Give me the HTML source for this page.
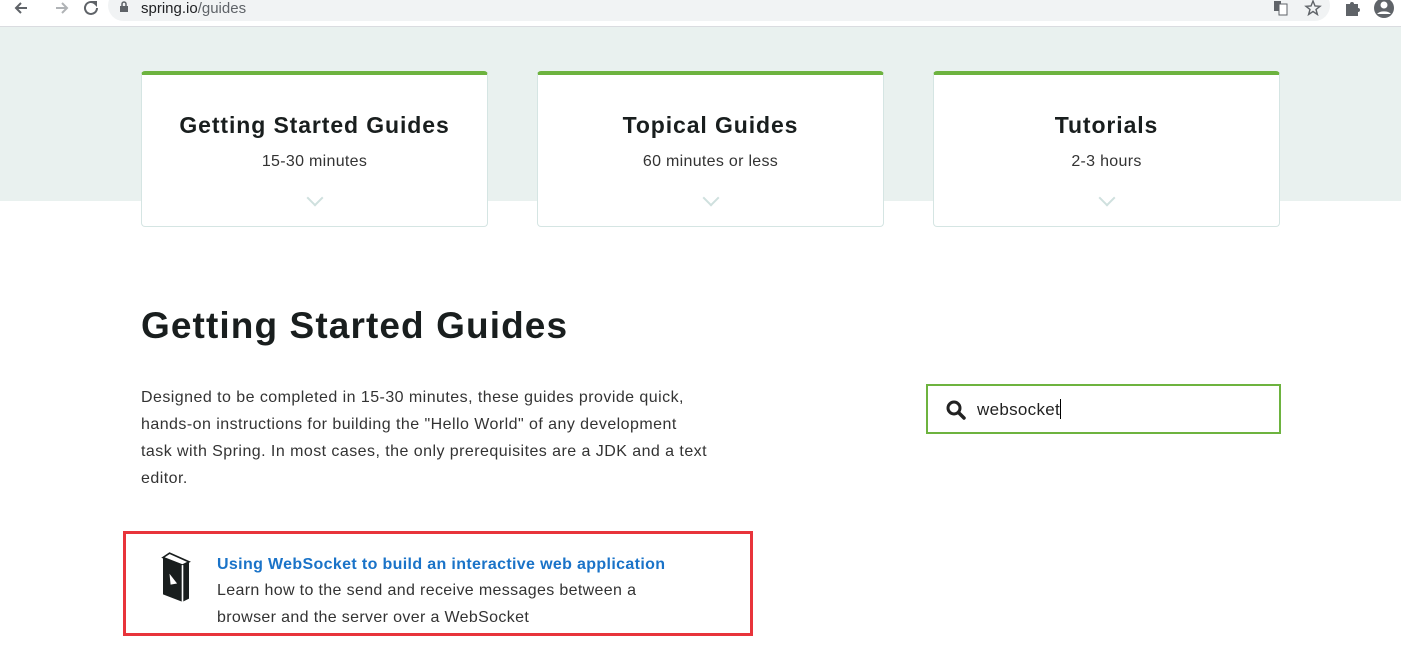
<!DOCTYPE html>
<html><head><meta charset="utf-8"><style>
*{margin:0;padding:0;box-sizing:border-box}
body{width:1401px;height:671px;overflow:hidden;background:#fff;font-family:"Liberation Sans",sans-serif;position:relative}
.bar{position:absolute;left:0;top:0;width:1401px;height:27px;background:#fff;border-bottom:1px solid #dadce0}
.pill{position:absolute;left:108px;top:-10px;width:1222px;height:31px;border-radius:16px;background:#f1f3f4}
.url{position:absolute;left:141px;top:0;font-size:15px;color:#202124;line-height:17px}
.url span{color:#5f6368}
.band{position:absolute;left:0;top:27px;width:1401px;height:174px;background:#e9f1ef}
.card{position:absolute;top:71px;width:347px;height:156px;background:#fff;border:1px solid #d5e5e3;border-top:4px solid #6db33f;border-radius:4px;text-align:center}
.card h3{font-size:23px;font-weight:bold;color:#191e1e;margin-top:37px;letter-spacing:0.9px}
.card p{font-size:16px;color:#333;margin-top:14px;letter-spacing:0.3px}
.chev{position:absolute;left:50%;top:117px;width:12px;height:12px;margin-left:-6px;border-right:2px solid #cfe0de;border-bottom:2px solid #cfe0de;transform:rotate(45deg)}
h1{position:absolute;left:141px;top:305px;font-size:37px;font-weight:bold;color:#191e1e;letter-spacing:1.1px}
.desc{position:absolute;left:141px;top:384px;width:566px;font-size:16px;line-height:27px;color:#333;letter-spacing:0.45px}
.search{position:absolute;left:926px;top:384px;width:355px;height:50px;border:2px solid #6db33f;background:#fff}
.search .t{position:absolute;left:49px;top:13px;font-size:17px;color:#222;letter-spacing:0.3px}
.search .t:after{content:"";display:inline-block;width:1px;height:20px;background:#000;vertical-align:-4px}
.res{position:absolute;left:123px;top:531px;width:630px;height:105px;border:3px solid #e8343b}
.res a{position:absolute;left:91px;top:22px;font-size:16px;font-weight:bold;color:#1a73c8;text-decoration:none;letter-spacing:0.35px}
.res p{position:absolute;left:91px;top:43px;width:450px;font-size:16px;line-height:27px;color:#333;letter-spacing:0.35px}
</style></head><body>
<div class="bar">
<svg style="position:absolute;left:11px;top:0" width="90" height="18" viewBox="0 0 90 18">
<path d="M16 8H5M10 3L5 8l5 5" stroke="#5f6368" stroke-width="2" fill="none"/>
<path d="M45 8H56M51 3l5 5-5 5" stroke="#b0b3b6" stroke-width="2" fill="none"/>
<path d="M86 8a6 6 0 1 1-2-4.5" stroke="#5f6368" stroke-width="2" fill="none"/><path d="M80 1h6v6z" fill="#5f6368"/>
</svg>
<div class="pill"></div>
<svg style="position:absolute;left:119px;top:1px" width="10" height="12"><rect x="1" y="5" width="8" height="6" fill="#5f6368"/><path d="M3 5V3a2 2 0 0 1 4 0v2" stroke="#5f6368" stroke-width="1.5" fill="none"/></svg>
<div class="url">spring.io<span>/guides</span></div>
<svg style="position:absolute;left:1272px;top:0" width="129" height="18">
<rect x="2" y="1" width="7" height="10" fill="#5f6368"/><rect x="7" y="4" width="8" height="11" fill="#fff" stroke="#5f6368"/>
<path d="M41 1l2 5 5 .3-4 3.2 1.4 5-4.4-3-4.4 3 1.4-5-4-3.2 5-.3z" fill="none" stroke="#5f6368" stroke-width="1.4"/>
<path d="M74 4h4a2 2 0 0 1 4 0h4v4a2 2 0 0 1 0 4v4h-12z" fill="#5f6368"/>
<circle cx="112" cy="8" r="10" fill="#5f6368"/><circle cx="112" cy="5" r="3.5" fill="#fff"/><path d="M105 14a8 5 0 0 1 14 0" fill="#fff"/>
</svg>
</div>
<div class="band"></div>
<div class="card" style="left:141px"><h3>Getting Started Guides</h3><p>15-30 minutes</p><div class="chev"></div></div>
<div class="card" style="left:537px"><h3>Topical Guides</h3><p>60 minutes or less</p><div class="chev"></div></div>
<div class="card" style="left:933px"><h3>Tutorials</h3><p>2-3 hours</p><div class="chev"></div></div>
<h1>Getting Started Guides</h1>
<div class="desc">Designed to be completed in 15-30 minutes, these guides provide quick, hands-on instructions for building the "Hello World" of any development task with Spring. In most cases, the only prerequisites are a JDK and a text editor.</div>
<div class="search">
<svg style="position:absolute;left:18px;top:14px" width="20" height="20"><circle cx="8" cy="8" r="6" stroke="#222" stroke-width="3" fill="none"/><path d="M12.5 12.5l5.5 5.5" stroke="#222" stroke-width="3.5" stroke-linecap="round"/></svg>
<div class="t">websocket</div>
</div>
<div class="res">
<svg style="position:absolute;left:34px;top:17px" width="32" height="52" viewBox="0 0 28 48">
<path d="M2 6L8 2l18 8v34l-6 3L2 40z" fill="#191e1e"/>
<path d="M8 2l18 8-6 3L2 6z" fill="#fff" stroke="#191e1e" stroke-width="1.5"/>
<path d="M20 13v34" stroke="#fff" stroke-width="1.5"/>
<path d="M8 21l7 9-6 1z" fill="#fff"/>
</svg>
<a>Using WebSocket to build an interactive web application</a>
<p>Learn how to the send and receive messages between a browser and the server over a WebSocket</p>
</div>
</body></html>
